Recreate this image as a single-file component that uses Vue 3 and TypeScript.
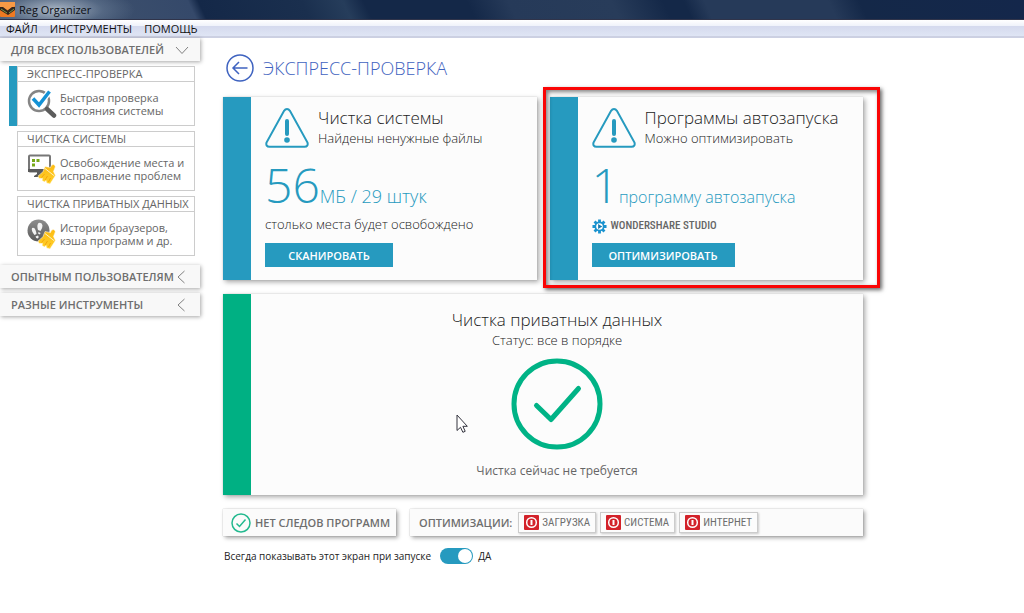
<script setup lang="ts">
import { ref } from 'vue'

interface Tool {
  id: string
  title: string
  lines: string[]
}

const menu: string[] = ['ФАЙЛ', 'ИНСТРУМЕНТЫ', 'ПОМОЩЬ']

const tools: Tool[] = [
  { id: 'express', title: 'ЭКСПРЕСС-ПРОВЕРКА', lines: ['Быстрая проверка', 'состояния системы'] },
  { id: 'system', title: 'ЧИСТКА СИСТЕМЫ', lines: ['Освобождение места и', 'исправление проблем'] },
  { id: 'private', title: 'ЧИСТКА ПРИВАТНЫХ ДАННЫХ', lines: ['Истории браузеров,', 'кэша программ и др.'] },
]

const collapsed: string[] = ['ОПЫТНЫМ ПОЛЬЗОВАТЕЛЯМ', 'РАЗНЫЕ ИНСТРУМЕНТЫ']
const optimizations: string[] = ['ЗАГРУЗКА', 'СИСТЕМА', 'ИНТЕРНЕТ']

const active = ref('express')
const showOnStart = ref(true)
</script>

<template>
  <div class="window">
    <header class="titlebar">
      <svg class="app-icon" viewBox="0 0 15 15" aria-hidden="true">
        <rect width="15" height="15" rx="1" fill="#ee7a22" />
        <path d="M0 0h15v4L8 8 0 5z" fill="#f79a45" />
        <path d="M0 5l3 0 4.500 3.500L12 5h3v3l-7 5-8-5z" fill="#33261c" />
        <path d="M1 7l6 4M14 7l-5 4" stroke="#7d9a4a" stroke-width="1" />
      </svg>
      <span class="app-name">Reg Organizer</span>
    </header>

    <nav class="menubar">
      <button v-for="m in menu" :key="m" type="button">{{ m }}</button>
    </nav>

    <div class="body">
      <aside class="sidebar">
        <button type="button" class="section">
          <span>ДЛЯ ВСЕХ ПОЛЬЗОВАТЕЛЕЙ</span>
          <svg class="chevron" viewBox="0 0 14 14"><path d="M1 4l6 6.500L13 4" /></svg>
        </button>

        <div class="tools">
          <button
            v-for="t in tools"
            :key="t.id"
            type="button"
            class="tool"
            :class="{ active: active === t.id }"
            @click="active = t.id"
          >
            <span class="tool-title">{{ t.title }}</span>
            <span class="tool-body">
              <svg v-if="t.id === 'express'" class="tool-icon" viewBox="0 0 30 30">
                <circle cx="12" cy="12" r="10" fill="#fff" stroke="#858585" stroke-width="2.500" />
                <path d="M20 20l7 6.500" stroke="#5c5c5c" stroke-width="4.500" stroke-linecap="round" />
                <path d="M6 9.500l6 6.500L22.500 2.500" fill="none" stroke="#fff" stroke-width="6" />
                <path d="M6 9.500l6 6.500L22.500 2.500" fill="none" stroke="#1492d6" stroke-width="3.500" />
              </svg>
              <svg v-else class="tool-icon" viewBox="0 0 30 30">
                <defs>
                  <linearGradient id="globe-shade" x1="0" y1="0" x2="0" y2="1">
                    <stop offset="0" stop-color="#8d8d8d" />
                    <stop offset="1" stop-color="#5a5a5a" />
                  </linearGradient>
                  <linearGradient id="broom-shade" x1="0" y1="0" x2="0" y2="1">
                    <stop offset="0" stop-color="#fdbb12" />
                    <stop offset="1" stop-color="#ffd02c" />
                  </linearGradient>
                </defs>
                <template v-if="t.id === 'system'">
                  <rect x="2" y="1.500" width="21" height="16" rx="1" fill="#fff" stroke="#777" stroke-width="2" />
                  <path d="M1 15h23v3h-8v2l3 2v1H7v-1l3-2v-2H1z" fill="#5a5a5a" />
                  <path d="M5 5h3v3H5zM9.500 5h3v3h-3zM5 9.500h3v3H5z" fill="#77a818" />
                </template>
                <template v-else>
                  <circle cx="11.500" cy="11.500" r="11" fill="url(#globe-shade)" />
                  <path d="M11.500 4Q15 3 15.500 6.500Q15.500 9.500 13.500 12L11 11Q9.500 6 11.500 4Z" fill="#f2f2f2" />
                  <path d="M5 9Q7.500 8 8.500 11Q9.500 13.500 9.500 15L7.500 16Q4 12 5 9Z" fill="#f2f2f2" />
                  <path d="M8.500 17.500L11 16.500Q12.500 18.500 10.500 19.500Q9 19.500 8.500 17.500ZM11.500 13l2 1-.5 1.500-2-1z" fill="#f2f2f2" />
                </template>
                <path
                  d="M18 12.500L23.500 13.500Q24 10.500 26.500 10.500Q29.500 12 27.500 15L26.500 17.500L28.500 21.500L26.500 24.500L23 30L19.500 29L19 26.500L17.500 28L15 26.500L15.500 24.500L12 24.500L11 22L13.500 20L16 17.500Z"
                  fill="url(#broom-shade)"
                  stroke="#fff"
                  stroke-width="0.500"
                />
                <path d="M18 14.500L27.500 22" stroke="#fff3c4" stroke-width="1" />
                <path d="M17.500 20l-3 3.500M20.500 22l-2.500 4M23.500 24l-2 4" stroke="#f5a60a" />
              </svg>
              <span class="tool-text">
                <span v-for="l in t.lines" :key="l">{{ l }}</span>
              </span>
            </span>
          </button>
        </div>

        <div class="more">
          <button v-for="c in collapsed" :key="c" type="button" class="section">
            <span>{{ c }}</span>
            <svg class="chevron" viewBox="0 0 14 14"><path d="M9.500 1L3 7l6.500 6" /></svg>
          </button>
        </div>
      </aside>

      <main class="content">
        <div class="heading">
          <button type="button" class="back" aria-label="Назад">
            <svg viewBox="0 0 28 28">
              <circle cx="14" cy="14" r="13" />
              <path d="M21.500 14H7.500M13 8l-6 6 6 6" />
            </svg>
          </button>
          <h1>ЭКСПРЕСС-ПРОВЕРКА</h1>
        </div>

        <div class="cards">
          <section class="card">
            <div class="card-head">
              <svg class="warn" viewBox="0 0 44 40">
                <path d="M18.800 3.200Q22 -1 25.200 3.200L42.500 34.500Q43.500 38.500 39.500 38.800H4.500Q.500 38.500 1.500 34.500Z" />
                <path class="bar" d="M22 13v13" />
                <circle cx="22" cy="32" r="2.800" />
              </svg>
              <div>
                <h2>Чистка системы</h2>
                <p class="sub">Найдены ненужные файлы</p>
              </div>
            </div>
            <p class="figure"><span class="big">56</span><span class="unit">МБ / 29 штук</span></p>
            <p class="note">столько места будет освобождено</p>
            <button type="button" class="action">СКАНИРОВАТЬ</button>
          </section>

          <section class="card marked">
            <div class="card-head">
              <svg class="warn" viewBox="0 0 44 40">
                <path d="M18.800 3.200Q22 -1 25.200 3.200L42.500 34.500Q43.500 38.500 39.500 38.800H4.500Q.500 38.500 1.500 34.500Z" />
                <path class="bar" d="M22 13v13" />
                <circle cx="22" cy="32" r="2.800" />
              </svg>
              <div>
                <h2>Программы автозапуска</h2>
                <p class="sub">Можно оптимизировать</p>
              </div>
            </div>
            <p class="figure"><span class="big">1</span><span class="unit tight">программу автозапуска</span></p>
            <p class="note program">
              <svg class="gear" viewBox="0 0 16 16">
                <g stroke="#1b93cf" stroke-width="3">
                  <path d="M8 0.500v15M.500 8h15M2.700 2.700l10.600 10.600M13.300 2.700L2.700 13.300" />
                </g>
                <circle cx="8" cy="8" r="5.300" fill="#1b93cf" />
                <circle cx="8" cy="8" r="3.500" fill="#fff" />
                <path d="M6.500 5.300L11 8l-4.500 2.700z" fill="#1779ae" />
              </svg>
              <span>WONDERSHARE STUDIO</span>
            </p>
            <button type="button" class="action wide">ОПТИМИЗИРОВАТЬ</button>
            <span class="highlight" aria-hidden="true"></span>
          </section>

          <section class="card ok">
            <h2>Чистка приватных данных</h2>
            <p class="sub">Статус: все в порядке</p>
            <svg class="done" viewBox="0 0 92 92">
              <circle cx="46" cy="46" r="43" />
              <path d="M25.500 47.500L40 61.500L67.500 30.500" />
            </svg>
            <p class="muted">Чистка сейчас не требуется</p>
            <svg class="pointer" viewBox="0 0 12 19" aria-hidden="true">
              <path d="M1 1v15.500l3.500-3.200 2.400 5 2.300-1-2.300-5H11.300z" fill="#fff" stroke="#34343f" stroke-width="1" />
            </svg>
          </section>
        </div>

        <div class="status">
          <div class="panel traces">
            <svg class="small-ok" viewBox="0 0 20 20">
              <circle cx="10" cy="10" r="9" />
              <path d="M5.500 10.500l3 3 6-7" />
            </svg>
            <span>НЕТ СЛЕДОВ ПРОГРАММ</span>
          </div>
          <div class="panel optim">
            <span>ОПТИМИЗАЦИИ:</span>
            <div class="chips">
              <button v-for="o in optimizations" :key="o" type="button" class="chip">
                <svg viewBox="0 0 15 15">
                  <rect width="15" height="15" rx="1" fill="#d3222a" />
                  <circle cx="7.500" cy="7.500" r="4.800" fill="none" stroke="#fff" stroke-width="1.500" />
                  <path d="M7.500 5v5" stroke="#fff" stroke-width="2" />
                </svg>
                <span>{{ o }}</span>
              </button>
            </div>
          </div>
        </div>

        <div class="startup">
          <label for="show-on-start">Всегда показывать этот экран при запуске</label>
          <input id="show-on-start" v-model="showOnStart" type="checkbox" class="toggle" />
          <span>{{ showOnStart ? 'ДА' : 'НЕТ' }}</span>
        </div>
      </main>
    </div>
  </div>
</template>

<style>
body {
  background: #fff;
}
</style>

<style scoped>
.window {
  min-height: 100vh;
  font-family: 'Open Sans', 'Noto Sans', sans-serif;
  font-size: 11px;
  color: #222;
  background: #fff;
}
button {
  font: inherit;
  color: inherit;
  border: 0;
  padding: 0;
  margin: 0;
  background: none;
  text-align: left;
  white-space: nowrap;
}
h1,
h2,
p {
  margin: 0;
  font-weight: 300;
}
svg {
  display: block;
  flex: none;
}
.titlebar {
  box-sizing: border-box;
  height: 20px;
  display: flex;
  align-items: center;
  gap: 4px;
  border-bottom: 1px solid #30344a;
  background:
    radial-gradient(ellipse 80px 24px at 55px 10px, rgba(205, 215, 226, 0.75), rgba(120, 140, 165, 0.4) 60%, transparent),
    linear-gradient(65deg, #44566f 0, #35496a 19%, #142848 20%, #1a2f4e 30%, #263d5b 34%, #142848 36%, #142848 46%, #263a59 50%, #283c5a 60%, #142848 65%, #142848 67%, #263a59 69%, #263a59 81%, #142848 84%, #14274b 100%);
}
.app-icon {
  width: 15px;
  height: 15px;
}
.app-name {
  color: #0b0d12;
  line-height: 18px;
}
.menubar {
  box-sizing: border-box;
  height: 18px;
  padding: 0 6px;
  display: flex;
  gap: 12px;
  background: linear-gradient(#fff, #eef1fa 35%, #d5daee 36%, #dfe5f4 88%, #ccd0e2 89%);
  line-height: 18px;
  color: #111;
}
.body {
  display: flex;
  align-items: flex-start;
}
.sidebar {
  flex: 0 0 200px;
  min-width: 0;
}
.section {
  box-sizing: border-box;
  width: 100%;
  height: 23px;
  padding: 0 11px;
  display: flex;
  align-items: center;
  justify-content: space-between;
  background: #f8f8f8;
  box-shadow: 1px 1px 4px rgba(0, 0, 0, 0.35);
  font-weight: 600;
  color: #6e6e6e;
}
.chevron {
  width: 14px;
  height: 14px;
  fill: none;
  stroke: #808080;
}
.tools {
  display: flex;
  flex-direction: column;
  gap: 5px;
  padding: 5px 5px 0 9px;
}
.tool {
  border-left: 8px solid transparent;
  color: #666;
}
.tool.active {
  border-left-color: #269abf;
}
.tool-title,
.tool-body {
  box-sizing: border-box;
  display: flex;
  align-items: center;
  border: 1px solid #ccc;
  padding-left: 9px;
}
.tool-title {
  height: 16px;
  line-height: 14px;
}
.tool-body {
  height: 44px;
  border-top: 0;
  gap: 3px;
  line-height: 13px;
}
.tool-icon {
  width: 30px;
  height: 30px;
}
.tool-text {
  display: flex;
  flex-direction: column;
}
.more {
  margin-top: 9px;
  display: flex;
  flex-direction: column;
  gap: 5px;
}
.content {
  flex: 1;
  min-width: 0;
  padding: 16px 161px 0 23px;
}
.heading {
  display: flex;
  align-items: center;
  gap: 9px;
  padding-left: 3px;
  color: #3f63c0;
}
.heading h1 {
  font-size: 18px;
  line-height: 28px;
}
.back svg {
  width: 28px;
  height: 28px;
  fill: none;
  stroke: #3f63c0;
  stroke-width: 1.5px;
}
.cards {
  margin-top: 15px;
  display: grid;
  grid-template-columns: 1fr 1fr;
  gap: 14px 13px;
}
.card {
  position: relative;
  box-sizing: border-box;
  min-width: 0;
  min-height: 183px;
  padding: 10px 8px 12px 14px;
  border-left: 28px solid #269abf;
  background: #fcfcfc;
  box-shadow: 2px 2px 5px rgba(0, 0, 0, 0.35), 0 0 1px rgba(0, 0, 0, 0.2);
  white-space: nowrap;
}
.card-head {
  display: flex;
  align-items: center;
  gap: 9px;
}
.warn {
  width: 44px;
  height: 40px;
  fill: none;
  stroke: #269abf;
  stroke-width: 2px;
}
.warn .bar {
  stroke-width: 4px;
  stroke-linecap: round;
}
.warn circle {
  fill: #269abf;
  stroke: none;
}
h2 {
  font-size: 17px;
  line-height: 22px;
}
.sub {
  font-size: 13px;
  line-height: 19px;
}
.figure {
  display: flex;
  align-items: baseline;
  height: 65px;
  color: #269abf;
}
.big {
  font-size: 48px;
  line-height: 74px;
}
.unit {
  font-size: 18px;
}
.unit.tight {
  font-size: 16px;
}
.note {
  height: 22px;
  font-size: 13px;
  line-height: 22px;
}
.program {
  box-sizing: border-box;
  padding-top: 4px;
  display: flex;
  align-items: center;
  gap: 4px;
  font-family: 'Roboto Condensed', 'Liberation Sans Narrow', Roboto, sans-serif;
  font-size: 11px;
  font-weight: 500;
  color: #666;
}
.gear {
  width: 15px;
  height: 15px;
}
.action {
  display: block;
  width: 128px;
  height: 24px;
  margin-top: 8px;
  background: #269abf;
  color: #fff;
  font-weight: 600;
  text-align: center;
}
.action.wide {
  width: 143px;
}
.highlight {
  position: absolute;
  inset: -10px -17px -8px -35px;
  border: 3px solid #fa0505;
  box-shadow: 2px 2px 4px rgba(0, 0, 0, 0.6), inset 2px 2px 4px rgba(0, 0, 0, 0.5);
  pointer-events: none;
  z-index: 1;
}
.card.ok {
  grid-column: 1 / -1;
  min-height: 201px;
  padding: 15px 0 14px;
  display: flex;
  flex-direction: column;
  align-items: center;
  border-left-color: #00b083;
}
.done {
  width: 92px;
  height: 92px;
  margin: 8px 0 11px;
  fill: none;
  stroke: #00b386;
  stroke-width: 5px;
  stroke-linecap: round;
  stroke-linejoin: round;
}
.muted {
  font-size: 12px;
  line-height: 20px;
  font-weight: 400;
  color: #666;
}
.pointer {
  position: absolute;
  left: 205px;
  top: 120px;
  width: 12px;
  height: 19px;
}
.status {
  margin-top: 14px;
  display: flex;
  gap: 14px;
}
.panel {
  box-sizing: border-box;
  height: 27px;
  display: flex;
  align-items: center;
  background: #fbfbfb;
  box-shadow: 2px 2px 4px rgba(0, 0, 0, 0.35), 0 0 1px rgba(0, 0, 0, 0.3);
  font-weight: 600;
  color: #6e6e6e;
  white-space: nowrap;
}
.traces {
  width: 173px;
  padding-left: 8px;
  gap: 4px;
}
.small-ok {
  width: 20px;
  height: 20px;
  fill: none;
  stroke: #23b98f;
  stroke-width: 1.5px;
}
.optim {
  flex: 1;
  padding-left: 9px;
  gap: 6px;
}
.chips {
  display: flex;
  gap: 4px;
}
.chip {
  box-sizing: border-box;
  height: 21px;
  padding: 0 5px;
  display: flex;
  align-items: center;
  gap: 3px;
  border: 1px solid #ccc;
  background: #fcfcfc;
  box-shadow: 1px 1px 2px rgba(0, 0, 0, 0.2);
  font-family: 'Roboto Condensed', 'Liberation Sans Narrow', Roboto, sans-serif;
  font-weight: 400;
}
.chip svg {
  width: 15px;
  height: 15px;
}
.startup {
  margin-top: 11px;
  display: flex;
  align-items: center;
  gap: 5px;
  padding-left: 1px;
  font-size: 10px;
  line-height: 18px;
}
.startup label {
  margin-right: 4px;
}
.toggle {
  appearance: none;
  box-sizing: border-box;
  width: 33px;
  height: 16px;
  margin: 0;
  padding: 1px;
  display: flex;
  border-radius: 8px;
  background: #999;
}
.toggle::before {
  content: '';
  width: 14px;
  height: 14px;
  border-radius: 50%;
  background: #fff;
}
.toggle:checked {
  justify-content: flex-end;
  background: #269abf;
}
</style>
